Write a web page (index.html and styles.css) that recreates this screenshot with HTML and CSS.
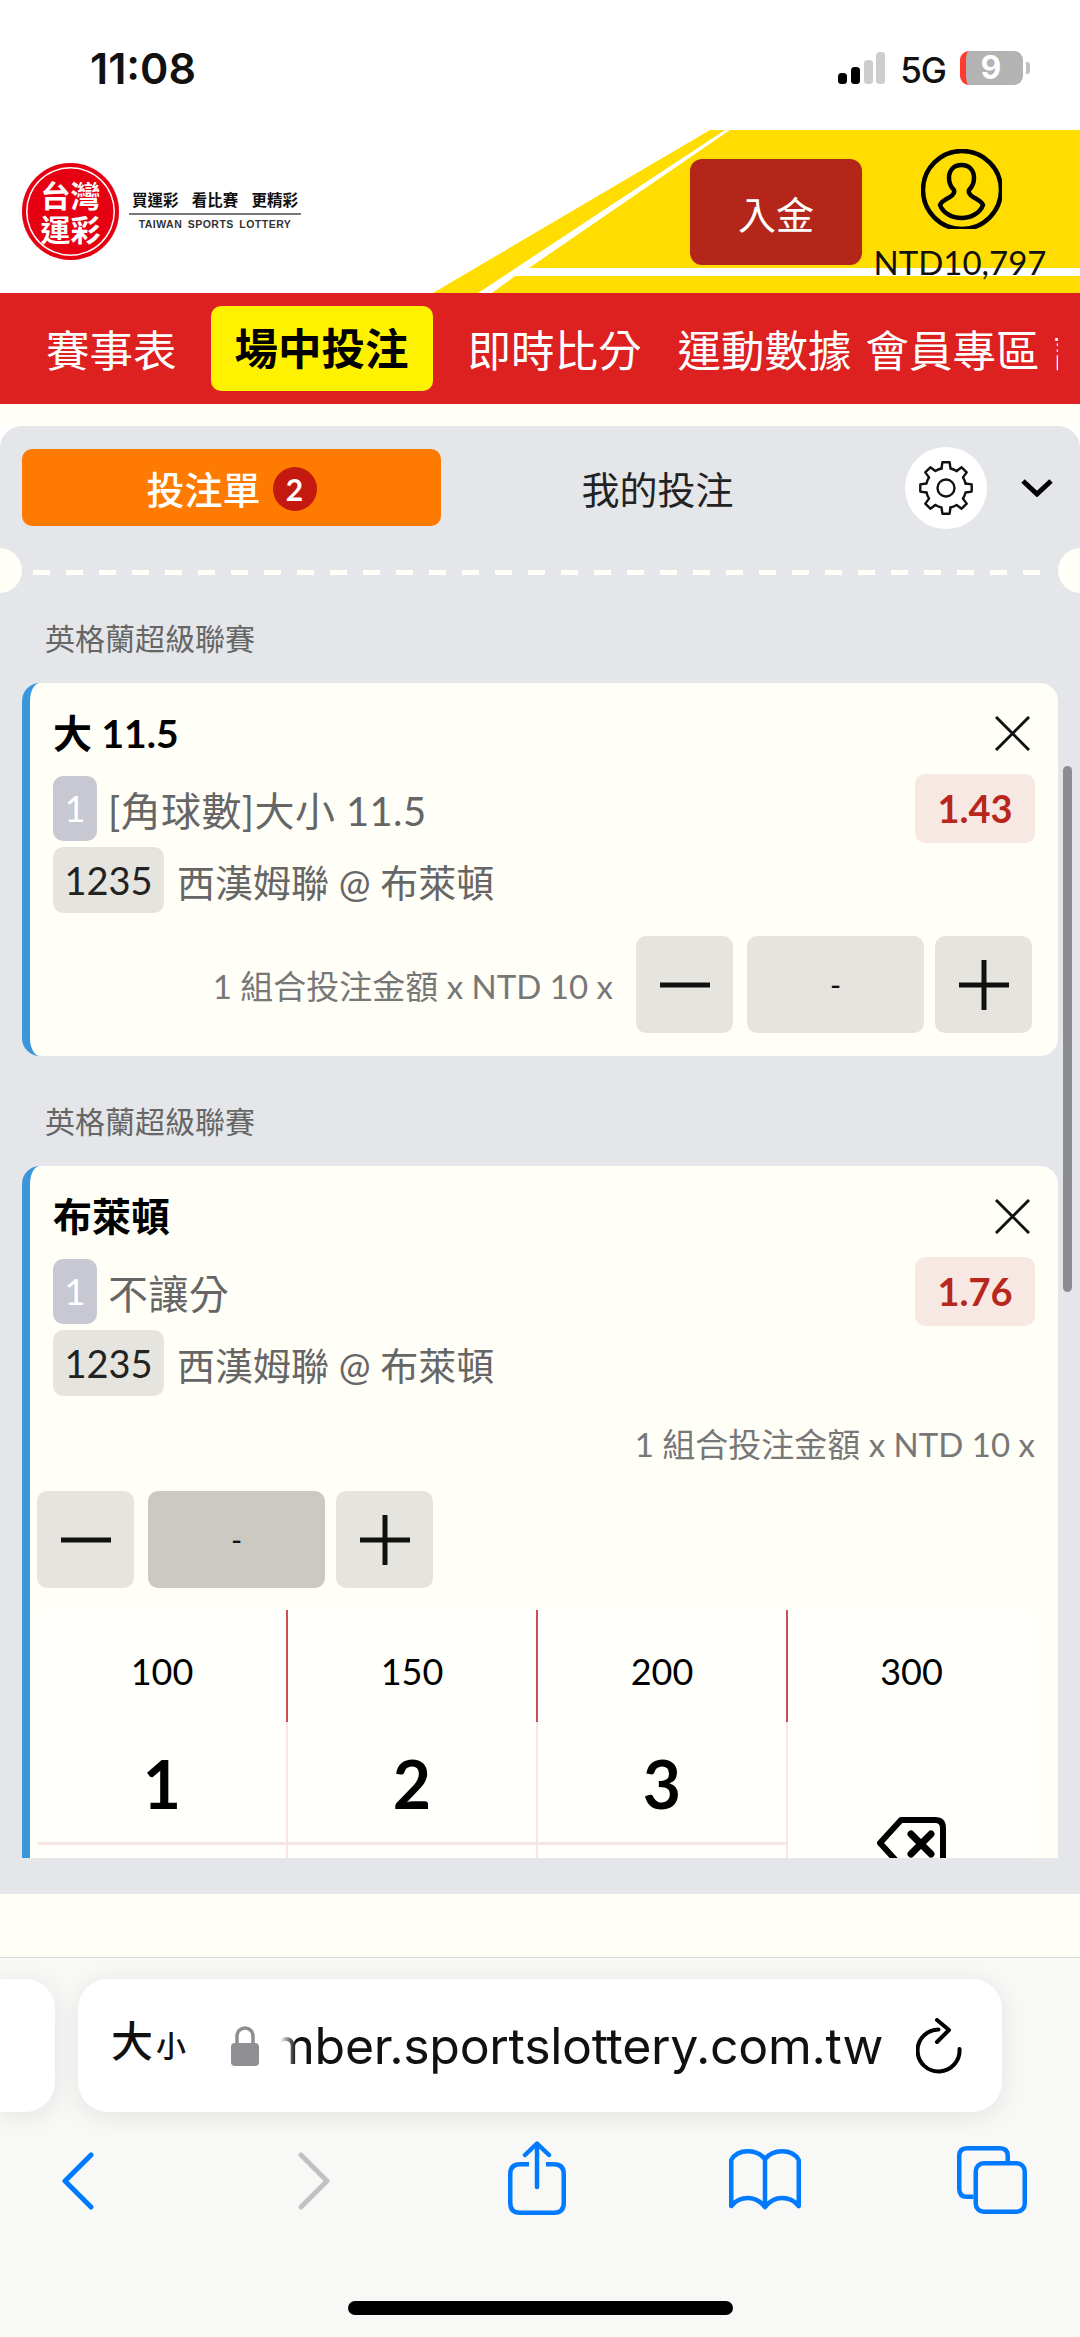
FILE: index.html
```html
<!doctype html>
<html lang="zh-Hant">
  <head>
    <meta charset="utf-8">
    <title>台灣運彩</title>
    <meta name="viewport" content="width=device-width, initial-scale=1">
    <link rel="stylesheet" href="styles.css">
  </head>
  <body>
    <div class="status">
      <span class="time">11:08</span>
      <svg class="signal" width="47" height="32" viewBox="0 0 47 32">
        <rect x="0" y="21" width="9" height="11" rx="3.5" fill="#000"/>
        <rect x="13" y="15" width="9" height="17" rx="3.5" fill="#000"/>
        <rect x="26" y="8" width="9" height="24" rx="3.5" fill="#cdcdcd"/>
        <rect x="38" y="0" width="9" height="32" rx="3.5" fill="#cdcdcd"/>
      </svg>
      <span class="network">5G</span>
      <div class="battery"><span class="battery-level">9</span></div>
    </div>

    <header class="site-header">
      <svg class="header-stripes" width="1080" height="163" viewBox="0 0 1080 163">
        <polygon points="710,0 725,0 478,163 433,163" fill="#ffdd00"/>
        <polygon points="730,0 1080,0 1080,138 529,138" fill="#ffdd00"/>
        <polygon points="515,146 1080,146 1080,163 492,163" fill="#ffdd00"/>
      </svg>
      <div class="logo">
        <div class="logo-badge">
          <span>台灣</span>
          <span>運彩</span>
        </div>
        <div class="logo-text">
          <div class="logo-slogan"><span>買運彩</span><span>看比賽</span><span>更精彩</span></div>
          <div class="logo-english">TAIWAN SPORTS LOTTERY</div>
        </div>
      </div>
      <button class="deposit">入金</button>
      <div class="account">
        <svg class="account-icon" width="81" height="80" viewBox="0 0 81 80" fill="none" stroke="#000" stroke-width="4.5">
          <ellipse cx="41" cy="41" rx="39" ry="39"/>
          <path d="M40.5 16C33 16 28 21 28 29C28 35 30 38 33 41C34 44 32 46 29 48C25 50 20 53 19 56C22 64 31 69 40.5 69C50 69 59 64 62 56C61 53 56 50 52 48C49 46 47 44 48 41C51 38 53 35 53 29C53 21 48 16 40.5 16Z"/>
        </svg>
        <div class="balance">NTD10,797</div>
      </div>
    </header>

    <nav class="nav">
      <div class="nav-list">
        <a class="nav-item">賽事表</a>
        <a class="nav-item nav-active">場中投注</a>
        <a class="nav-item nav-wide">即時比分</a>
        <a class="nav-item nav-tight">運動數據</a>
        <a class="nav-item nav-tight">會員專區</a>
        <a class="nav-item">說明</a>
      </div>
    </nav>

    <div class="spacer-top"></div>

    <main class="panel">
      <div class="tabs">
        <button class="tab tab-active">投注單<span class="tab-badge">2</span></button>
        <button class="tab">我的投注</button>
        <div class="settings">
          <svg width="56" height="56" viewBox="0 0 56 56" fill="none" stroke="#111" stroke-width="2.4" stroke-linecap="round" stroke-linejoin="round">
            <defs>
              <path id="gear-tooth" d="M23.5 8.500L24.400 2.300H31.600L32.500 8.500A20 20 0 0 1 38.600 11"/>
            </defs>
            <use href="#gear-tooth"/>
            <use href="#gear-tooth" transform="rotate(45 28 28)"/>
            <use href="#gear-tooth" transform="rotate(90 28 28)"/>
            <use href="#gear-tooth" transform="rotate(135 28 28)"/>
            <use href="#gear-tooth" transform="rotate(180 28 28)"/>
            <use href="#gear-tooth" transform="rotate(225 28 28)"/>
            <use href="#gear-tooth" transform="rotate(270 28 28)"/>
            <use href="#gear-tooth" transform="rotate(315 28 28)"/>
            <circle cx="28" cy="28" r="8.500"/>
          </svg>
        </div>
        <svg class="collapse" width="32" height="18" viewBox="0 0 32 18" fill="none" stroke="#000" stroke-width="5">
          <path d="M2 2L16 15L30 2"/>
        </svg>
      </div>

      <div class="divider">
        <div class="notch notch-left"></div>
        <div class="dashes"></div>
        <div class="notch notch-right"></div>
      </div>

      <div class="bets">
        <div class="league">英格蘭超級聯賽</div>
        <section class="card">
          <div class="card-title">
            <span>大 11.5</span>
            <svg width="35" height="35" viewBox="0 0 35 35" stroke="#111" stroke-width="3"><path d="M1 1L34 34M34 1L1 34"/></svg>
          </div>
          <div class="selection">
            <span class="tag-leg">1</span>
            <span class="info">[角球數]大小 11.5</span>
            <span class="odds">1.43</span>
          </div>
          <div class="match">
            <span class="tag-code">1235</span>
            <span class="info">西漢姆聯 @ 布萊頓</span>
          </div>
          <div class="stake-row">
            <span class="stake-note">1 組合投注金額 x NTD 10 x</span>
            <div class="stepper">
              <button class="step"><svg width="50" height="50" viewBox="0 0 50 50" stroke="#111" stroke-width="5"><path d="M0 25H50"/></svg></button>
              <div class="amount">-</div>
              <button class="step"><svg width="50" height="50" viewBox="0 0 50 50" stroke="#111" stroke-width="5"><path d="M0 25H50M25 0V50"/></svg></button>
            </div>
          </div>
        </section>

        <div class="league">英格蘭超級聯賽</div>
        <section class="card card-open">
          <div class="card-title">
            <span>布萊頓</span>
            <svg width="35" height="35" viewBox="0 0 35 35" stroke="#111" stroke-width="3"><path d="M1 1L34 34M34 1L1 34"/></svg>
          </div>
          <div class="selection">
            <span class="tag-leg">1</span>
            <span class="info">不讓分</span>
            <span class="odds">1.76</span>
          </div>
          <div class="match">
            <span class="tag-code">1235</span>
            <span class="info">西漢姆聯 @ 布萊頓</span>
          </div>
          <div class="stake-note stake-note-open">1 組合投注金額 x NTD 10 x</div>
          <div class="stepper stepper-open">
            <button class="step"><svg width="50" height="50" viewBox="0 0 50 50" stroke="#111" stroke-width="5"><path d="M0 25H50"/></svg></button>
            <div class="amount amount-focus">-</div>
            <button class="step"><svg width="50" height="50" viewBox="0 0 50 50" stroke="#111" stroke-width="5"><path d="M0 25H50M25 0V50"/></svg></button>
          </div>
          <div class="keypad">
            <div class="quick">100</div>
            <div class="quick">150</div>
            <div class="quick">200</div>
            <div class="quick quick-last">300</div>
            <div class="key">1</div>
            <div class="key">2</div>
            <div class="key">3</div>
            <div class="key-back">
              <svg width="69" height="52" viewBox="0 0 69 52" fill="none" stroke="#000" stroke-width="6">
                <path d="M24 3H58Q66 3 66 11V41Q66 49 58 49H24L3 26Z" stroke-linejoin="round"/>
                <path d="M34 17L54 37M54 17L34 37" stroke-width="7" stroke-linecap="round"/>
              </svg>
            </div>
            <div class="key key-blank"></div>
            <div class="key key-blank"></div>
            <div class="key key-blank"></div>
          </div>
        </section>
      </div>
      <div class="scrollbar"></div>
    </main>

    <div class="spacer-bottom"></div>

    <footer class="browser">
      <div class="url-row">
        <div class="prev-tab"></div>
        <div class="url-bar">
          <span class="aa"><span class="aa-big">大</span><span class="aa-small">小</span></span>
          <svg class="lock" width="28" height="40" viewBox="0 0 28 40" fill="#8e8e93">
            <path d="M6 18V10a8 8 0 0 1 16 0V18" fill="none" stroke="#8e8e93" stroke-width="3.5"/>
            <rect x="0" y="17" width="28" height="23" rx="4"/>
          </svg>
          <div class="url-clip"><span class="url">mber.sportslottery.com.tw</span></div>
          <svg class="reload" width="46" height="56" viewBox="0 0 46 56" fill="none" stroke="#000" stroke-width="4" stroke-linecap="round" stroke-linejoin="round">
            <path d="M43.500 31A21 21 0 1 1 22.500 11.500"/>
            <path d="M21 2L33 12L21 24"/>
          </svg>
        </div>
      </div>
      <div class="toolbar">
        <svg class="tool-back" width="32" height="58" viewBox="0 0 32 58" fill="none" stroke="#007aff" stroke-width="5" stroke-linecap="round" stroke-linejoin="round"><path d="M29 3L3 29L29 55"/></svg>
        <svg class="tool-forward" width="32" height="58" viewBox="0 0 32 58" fill="none" stroke="#c2c2c2" stroke-width="5" stroke-linecap="round" stroke-linejoin="round"><path d="M3 3L29 29L3 55"/></svg>
        <svg class="tool-share" width="58" height="74" viewBox="0 0 58 74" fill="none" stroke="#007aff" stroke-width="4.5">
          <path d="M21 23.250H12Q2.250 23.250 2.250 33V62Q2.250 71.750 12 71.750H46Q55.750 71.750 55.750 62V33Q55.750 23.250 46 23.250H38"/>
          <path d="M29 46V3M17 14L29 2.500L41 14" stroke-linecap="round" stroke-linejoin="round"/>
        </svg>
        <svg class="tool-book" width="72" height="61" viewBox="0 0 72 61" fill="none" stroke="#007aff" stroke-width="4.5" stroke-linejoin="round">
          <path d="M36 10C32 5 26 2.250 19 2.250C11 2.250 5 6 2.250 11V57C7 51 13 49 19 49C26 49 32 53 36 58C40 53 46 49 53 49C59 49 65 51 69.750 57V11C67 6 61 2.250 53 2.250C46 2.250 40 5 36 10V58"/>
        </svg>
        <svg class="tool-tabs" width="70" height="68" viewBox="0 0 70 68" fill="none" stroke="#007aff" stroke-width="4.5">
          <path d="M16.500 50.750H10Q2.250 50.750 2.250 43V10Q2.250 2.250 10 2.250H43Q50.750 2.250 50.750 10V15"/>
          <rect x="18.750" y="17.250" width="49" height="48.500" rx="8"/>
        </svg>
      </div>
      <div class="home-bar"></div>
    </footer>
  </body>
</html>
```

FILE: styles.css
```css
* {
  box-sizing: border-box;
}
html, body {
  margin: 0;
  padding: 0;
}
body {
  width: 1080px;
  height: 2337px;
  overflow: hidden;
  background-color: #fff;
  font-family: Lato, "Noto Sans CJK TC", sans-serif;
  color: #111;
}
button {
  border: 0;
  padding: 0;
  font-family: inherit;
}

/* phone status bar */
.status {
  height: 130px;
  display: flex;
  align-items: flex-start;
  padding: 48px 57px 0 90px;
}
.time {
  font-family: Inter, sans-serif;
  font-size: 43px;
  font-weight: 600;
  line-height: 40px;
  margin-right: auto;
}
.signal {
  margin-top: 4px;
}
.network {
  font-family: Inter, sans-serif;
  font-size: 35px;
  font-weight: 500;
  line-height: 40px;
  letter-spacing: -1px;
  margin: 2px 14px 0 15px;
}
.battery {
  width: 63px;
  height: 34px;
  margin-top: 3px;
  border-radius: 9px;
  border-left: 6px solid #ff3b30;
  background-color: #b3b3b3;
  position: relative;
}
.battery::after {
  content: "";
  position: absolute;
  right: -7px;
  top: 11px;
  width: 4px;
  height: 12px;
  border-radius: 0 3px 3px 0;
  background-color: #c0c0c0;
}
.battery-level {
  display: block;
  width: 50px;
  color: #fff;
  font-family: Inter, sans-serif;
  font-size: 32px;
  font-weight: 700;
  line-height: 34px;
  text-align: center;
}

/* site header */
.site-header {
  height: 163px;
  position: relative;
  display: flex;
  align-items: flex-start;
}
.header-stripes {
  position: absolute;
  left: 0;
  top: 0;
}
.logo {
  position: relative;
  display: flex;
  align-items: center;
  gap: 10px;
  margin: 33px auto 0 22px;
}
.logo-badge {
  width: 97px;
  height: 97px;
  border-radius: 50%;
  background-color: #e60012;
  box-shadow: inset 0 0 0 4px #e60012, inset 0 0 0 5.5px #fff;
  display: flex;
  flex-direction: column;
  align-items: center;
  justify-content: center;
  color: #fff;
  font-size: 30px;
  font-weight: 700;
  line-height: 34px;
}
.logo-text {
  width: 172px;
}
.logo-slogan {
  display: flex;
  justify-content: space-between;
  padding: 0 3px 3px;
  font-size: 15.5px;
  font-weight: 700;
  line-height: 20px;
  border-bottom: 2px solid #777;
}
.logo-english {
  font-family: "Liberation Sans", sans-serif;
  font-size: 10.5px;
  font-weight: 700;
  letter-spacing: 0.5px;
  word-spacing: 2px;
  line-height: 18px;
  text-align: center;
  color: #333;
}
.deposit {
  position: relative;
  width: 172px;
  height: 106px;
  margin-top: 29px;
  border-radius: 12px;
  background-color: #b5261a;
  color: #fff;
  font-size: 38px;
}
.account {
  position: relative;
  width: 172px;
  margin: 19px 34px 0 12px;
  display: flex;
  flex-direction: column;
  align-items: center;
}
.account-icon {
  margin-left: 3px;
}
.balance {
  margin-top: 16px;
  font-size: 33px;
  line-height: 34px;
  white-space: nowrap;
}

/* red menu */
.nav {
  height: 111px;
  background-color: #dd2020;
  display: flex;
  align-items: center;
  padding-left: 46px;
  color: #fff;
  font-size: 43.5px;
}
.nav-list {
  width: 1012px;
  display: flex;
  align-items: center;
  overflow: hidden;
  white-space: nowrap;
}
.nav-item {
  flex: none;
  margin-right: 34px;
}
.nav-active {
  height: 85px;
  line-height: 85px;
  margin-right: 35px;
  padding: 0 24px;
  border-radius: 10px;
  background-color: #fff200;
  color: #000;
  font-weight: 700;
}
.nav-wide {
  margin-right: 36px;
}
.nav-tight {
  margin-right: 14px;
}

.spacer-top {
  height: 22px;
  background-color: #fffef7;
}

/* bet slip */
.panel {
  position: relative;
  height: 1468px;
  padding-top: 20px;
  border-radius: 22px 22px 0 0;
  background-color: #e4e6e9;
  overflow: hidden;
}
.tabs {
  display: flex;
  align-items: center;
  height: 83px;
  padding-left: 22px;
}
.tab {
  height: 77px;
  width: 433px;
  background: none;
  color: #222;
  font-size: 38px;
}
.tab-active {
  width: 419px;
  border-radius: 10px;
  background-color: #ff7a00;
  color: #fff;
  font-weight: 500;
}
.tab-badge {
  display: inline-block;
  width: 44px;
  height: 44px;
  margin-left: 12px;
  border-radius: 50%;
  background-color: #c4190f;
  font-family: Lato, sans-serif;
  font-size: 30px;
  font-weight: 700;
  line-height: 44px;
  vertical-align: 3px;
}
.settings {
  width: 82px;
  height: 82px;
  margin: 0 34px 0 31px;
  border-radius: 50%;
  background-color: #fff;
  display: flex;
  align-items: center;
  justify-content: center;
}

.divider {
  position: relative;
  height: 50px;
  margin-top: 19px;
  padding: 22px 33px 0;
}
.dashes {
  height: 5px;
  background-image: repeating-linear-gradient(90deg, #fffef7 0, #fffef7 17px, transparent 17px, transparent 33px);
}
.notch {
  position: absolute;
  top: 0;
  width: 45px;
  height: 45px;
  border-radius: 50%;
  background-color: #fffef7;
}
.notch-left {
  left: -23px;
}
.notch-right {
  right: -23px;
}

.bets {
  height: 1260px;
  padding: 0 22px;
  overflow: hidden;
}
.league {
  height: 34px;
  margin: 23px 0 28px;
  font-size: 30px;
  line-height: 34px;
  padding-left: 23px;
  color: #666;
}
.card {
  height: 373px;
  margin-bottom: 48px;
  padding: 25px 23px 0;
  border-left: 8px solid #3a97dc;
  border-radius: 18px;
  background-color: #fffef7;
}
.card-open {
  height: auto;
  margin-bottom: 0;
  border-radius: 18px 18px 0 0;
}
.card-title {
  display: flex;
  align-items: center;
  justify-content: space-between;
  height: 50px;
  padding-right: 5px;
  font-size: 39px;
  font-weight: 700;
  color: #000;
}
.card-title span {
  margin-bottom: 5px;
}
.selection {
  display: flex;
  align-items: center;
  height: 69px;
  margin-top: 16px;
}
.tag-leg {
  width: 44px;
  height: 65px;
  border-radius: 10px;
  background-color: #c8c8d2;
  color: #fff;
  font-size: 36px;
  line-height: 65px;
  text-align: center;
}
.info {
  margin-left: 11px;
  font-size: 38px;
  color: #666;
}
.selection .info {
  font-size: 40px;
  letter-spacing: 0.4px;
}
.odds {
  width: 120px;
  height: 69px;
  margin-left: auto;
  border-radius: 10px;
  background-color: #f8e8e3;
  color: #b8261c;
  font-size: 38px;
  font-weight: 700;
  line-height: 69px;
  text-align: center;
}
.match {
  display: flex;
  align-items: center;
  margin-top: 4px;
}
.tag-code {
  width: 111px;
  height: 66px;
  border-radius: 10px;
  background-color: #e6e4df;
  color: #222;
  font-size: 38px;
  line-height: 66px;
  text-align: center;
}
.match .info {
  margin-left: 13px;
}
.stake-row {
  display: flex;
  align-items: center;
  justify-content: flex-end;
  margin: 23px 3px 0 0;
}
.stake-note {
  font-size: 33px;
  color: #777;
}
.stepper {
  display: flex;
  margin-left: 23px;
}
.step {
  width: 97px;
  height: 97px;
  border-radius: 10px;
  background-color: #e6e4df;
  display: flex;
  align-items: center;
  justify-content: center;
}
.amount {
  width: 177px;
  height: 97px;
  margin: 0 11px 0 14px;
  border-radius: 10px;
  background-color: #e6e4df;
  font-size: 30px;
  line-height: 97px;
  text-align: center;
}
.stake-note-open {
  height: 40px;
  margin-top: 28px;
  line-height: 40px;
  text-align: right;
}
.stepper-open {
  margin: 27px 0 0 -16px;
}
.amount-focus {
  background-color: #ccc9c3;
}

.keypad {
  display: grid;
  grid-template-columns: 250px 250px 250px 247px;
  grid-template-rows: 112px 123px 60px;
  margin: 22px 0 0 -15px;
  background-color: #fffffb;
}
.quick {
  padding-top: 37px;
  border-right: 2px solid #c85050;
  font-size: 36px;
  line-height: 48px;
  text-align: center;
  color: #000;
}
.quick-last {
  border-right: 0;
}
.key {
  border-right: 2px solid #f8e4e4;
  border-bottom: 3px solid #f8e4e4;
  font-size: 66px;
  font-weight: 700;
  line-height: 123px;
  text-align: center;
  color: #000;
}
.key-blank {
  border-bottom: 0;
}
.key-back {
  grid-column: 4;
  grid-row: 2 / span 2;
  padding-top: 95px;
  text-align: center;
}
.scrollbar {
  position: absolute;
  right: 8px;
  top: 340px;
  width: 9px;
  height: 526px;
  border-radius: 5px;
  background-color: #8b8d91;
}

.spacer-bottom {
  height: 64px;
  border-bottom: 1px solid #d8d8d4;
  background-color: #fffef7;
}

/* safari toolbar */
.browser {
  height: 379px;
  padding-top: 21px;
  background-color: #f8f8f6;
}
.url-row {
  display: flex;
  gap: 23px;
}
.prev-tab {
  width: 55px;
  height: 133px;
  border-radius: 0 30px 30px 0;
  background-color: #fff;
  box-shadow: 0 4px 26px rgba(0, 0, 0, 0.09);
}
.url-bar {
  width: 924px;
  height: 133px;
  padding: 0 40px 0 32px;
  border-radius: 30px;
  background-color: #fff;
  box-shadow: 0 4px 26px rgba(0, 0, 0, 0.09);
  display: flex;
  align-items: center;
}
.aa {
  flex: none;
  width: 121px;
  font-weight: 500;
  line-height: 50px;
  padding-left: 1px;
}
.aa-big {
  font-size: 42px;
}
.aa-small {
  font-size: 30px;
  margin-left: 3px;
}
.lock {
  flex: none;
}
.url-clip {
  flex: none;
  width: 603px;
  margin: 0 33px 0 21px;
  display: flex;
  justify-content: flex-end;
  overflow: hidden;
  -webkit-mask-image: linear-gradient(90deg, transparent 0, #000 16px);
  mask-image: linear-gradient(90deg, transparent 0, #000 16px);
}
.url {
  flex: none;
  font-family: Inter, sans-serif;
  font-size: 50px;
  line-height: 64px;
  white-space: nowrap;
  letter-spacing: -0.3px;
}
.reload {
  flex: none;
}
.toolbar {
  display: flex;
  align-items: flex-start;
  height: 74px;
  margin-top: 29px;
  padding-left: 62px;
}
.tool-back {
  margin-top: 11px;
}
.tool-forward {
  margin: 11px 0 0 204px;
}
.tool-share {
  margin-left: 178px;
}
.tool-book {
  margin: 8px 0 0 163px;
}
.tool-tabs {
  margin: 5px 0 0 156px;
}
.home-bar {
  width: 385px;
  height: 14px;
  margin: 86px auto 0;
  border-radius: 7px;
  background-color: #000;
}
```
